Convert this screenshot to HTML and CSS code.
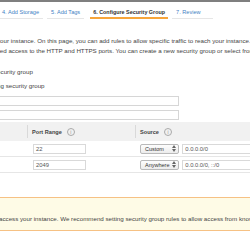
FILE: index.html
```html
<!DOCTYPE html>
<html lang="en">
<head>
    <meta charset="UTF-8">
    <meta name="viewport" content="width=device-width, initial-scale=1.0">
    <title>Configure Security Group</title>
    <link rel="stylesheet" href="styles.css">
</head>
<body>
    <div class="topbar"></div>

    <nav class="tabs">
        <a class="tab tab-first">4. Add Storage</a>
        <a class="tab">5. Add Tags</a>
        <a class="tab active">6. Configure Security Group</a>
        <a class="tab tab-last">7. Review</a>
    </nav>

    <div class="intro">
        <p class="line-one">your instance. On this page, you can add rules to allow specific traffic to reach your instance. For example</p>
        <p class="line-two">cted access to the HTTP and HTTPS ports. You can create a new security group or select from an existing one below.</p>
    </div>

    <div class="assign">
        <label class="radio-one">security group</label>
        <label class="radio-two">existing security group</label>
    </div>

    <div class="group-fields">
        <div class="text-field"></div>
        <div class="text-field"></div>
    </div>

    <div class="rules">
        <div class="rules-head">
            <div class="cell cell-type"></div>
            <div class="cell cell-port">Port Range <span class="info">i</span></div>
            <div class="cell cell-source">Source <span class="info">i</span></div>
        </div>
        <div class="rules-row">
            <div class="cell cell-type"></div>
            <div class="cell cell-port"><div class="port-input">22</div></div>
            <div class="cell cell-source">
                <div class="select">Custom
                    <svg class="arrows" width="4" height="7" viewBox="0 0 4 7"><path d="M0 3L2 0L4 3Z M0 4L2 7L4 4Z" fill="#666"/></svg>
                </div>
                <div class="source-input">0.0.0.0/0</div>
            </div>
        </div>
        <div class="rules-row">
            <div class="cell cell-type"></div>
            <div class="cell cell-port"><div class="port-input">2049</div></div>
            <div class="cell cell-source">
                <div class="select">Anywhere
                    <svg class="arrows" width="4" height="7" viewBox="0 0 4 7"><path d="M0 3L2 0L4 3Z M0 4L2 7L4 4Z" fill="#666"/></svg>
                </div>
                <div class="source-input">0.0.0.0/0, ::/0</div>
            </div>
        </div>
    </div>

    <div class="warning">
        <p>access your instance. We recommend setting security group rules to allow access from known IP addresses only.</p>
    </div>
</body>
</html>
```

FILE: styles.css
```css
body {
    font-family: "Liberation Sans", Arial, sans-serif;
    font-size: 6.2px;
    color: #444;
    margin: 0;
    padding: 0;
    width: 250px;
    height: 250px;
    overflow: hidden;
    background-color: #fff;
}
p {
    margin: 0;
}
.topbar {
    height: 2px;
    background-color: #7f7f7f;
}
.tabs {
    display: flex;
    white-space: nowrap;
    font-size: 5.6px;
}
.tab {
    display: block;
    color: #3f7fc4;
    line-height: 8px;
    padding: 6px 4px 2px 4px;
    margin-right: 4px;
    border-bottom: 1px solid #e6e6e6;
}
.tab-first {
    margin-left: -2px;
}
.tab.active {
    color: #333;
    font-weight: bold;
    font-size: 5.4px;
    padding: 6px 3px 1px 3px;
    margin-left: 2px;
    border-bottom: 2px solid #f7a53a;
}
.tab-last {
    padding-right: 12px;
}
.intro {
    margin-top: 17px;
    white-space: nowrap;
    line-height: 10px;
}
.line-one {
    margin-left: -3px;
}
.line-two {
    margin-left: -5px;
}
.assign {
    margin-top: 11px;
    white-space: nowrap;
    line-height: 10px;
}
.assign label {
    display: block;
}
.radio-one {
    margin-left: -6px;
}
.radio-two {
    margin-top: 4px;
    margin-left: -17px;
}
.group-fields {
    margin-top: 5px;
}
.text-field {
    box-sizing: border-box;
    margin-left: -10px;
    width: 189px;
    height: 10px;
    border: 1px solid #d6d6d6;
    margin-bottom: 4px;
}
.rules {
    margin-top: -2px;
    width: 290px;
}
.rules-head,
.rules-row {
    display: grid;
    grid-template-columns: 27px 108px 155px;
}
.rules-head {
    background-color: #f1f1f1;
    height: 19px;
    font-weight: bold;
    color: #444;
    font-size: 5.6px;
}
.rules-head .cell {
    display: flex;
    align-items: center;
}
.rules-head .cell-port,
.rules-head .cell-source {
    border-left: 1px solid #d9d9d9;
    padding-left: 4px;
    margin: 3px 0;
}
.info {
    display: inline-flex;
    justify-content: center;
    align-items: center;
    box-sizing: border-box;
    width: 8px;
    height: 8px;
    margin-left: 5px;
    border: 1px solid #aaa;
    border-radius: 50%;
    color: #999;
    font-weight: normal;
    font-size: 5px;
}
.rules-row {
    height: 15px;
    border-bottom: 1px solid #e6e6e6;
    align-items: center;
    font-size: 5.8px;
}
.port-input {
    box-sizing: border-box;
    margin-left: 6px;
    width: 53px;
    height: 10px;
    line-height: 8px;
    padding-left: 2px;
    border: 1px solid #d9d9d9;
    color: #555;
}
.cell-source {
    display: flex;
    align-items: center;
}
.select {
    box-sizing: border-box;
    display: flex;
    align-items: center;
    justify-content: space-between;
    margin-left: 5px;
    width: 40px;
    height: 10px;
    padding: 0 2px 0 4px;
    border: 1px solid #b9b9b9;
    border-radius: 2px;
    background: linear-gradient(#fdfdfd, #ececec);
    color: #333;
    font-size: 5.5px;
}
.source-input {
    box-sizing: border-box;
    margin-left: 3px;
    width: 110px;
    height: 10px;
    line-height: 8px;
    padding-left: 2px;
    border: 1px solid #d9d9d9;
    color: #555;
    white-space: nowrap;
}
.warning {
    margin-top: 24px;
    margin-left: -10px;
    width: 300px;
    box-sizing: border-box;
    border-top: 1px solid #f6c184;
    border-bottom: 1px solid #f6c184;
    background-color: #fefbe6;
    padding: 16px 0 6px 9px;
    height: 34px;
    line-height: 10px;
    white-space: nowrap;
}
```
